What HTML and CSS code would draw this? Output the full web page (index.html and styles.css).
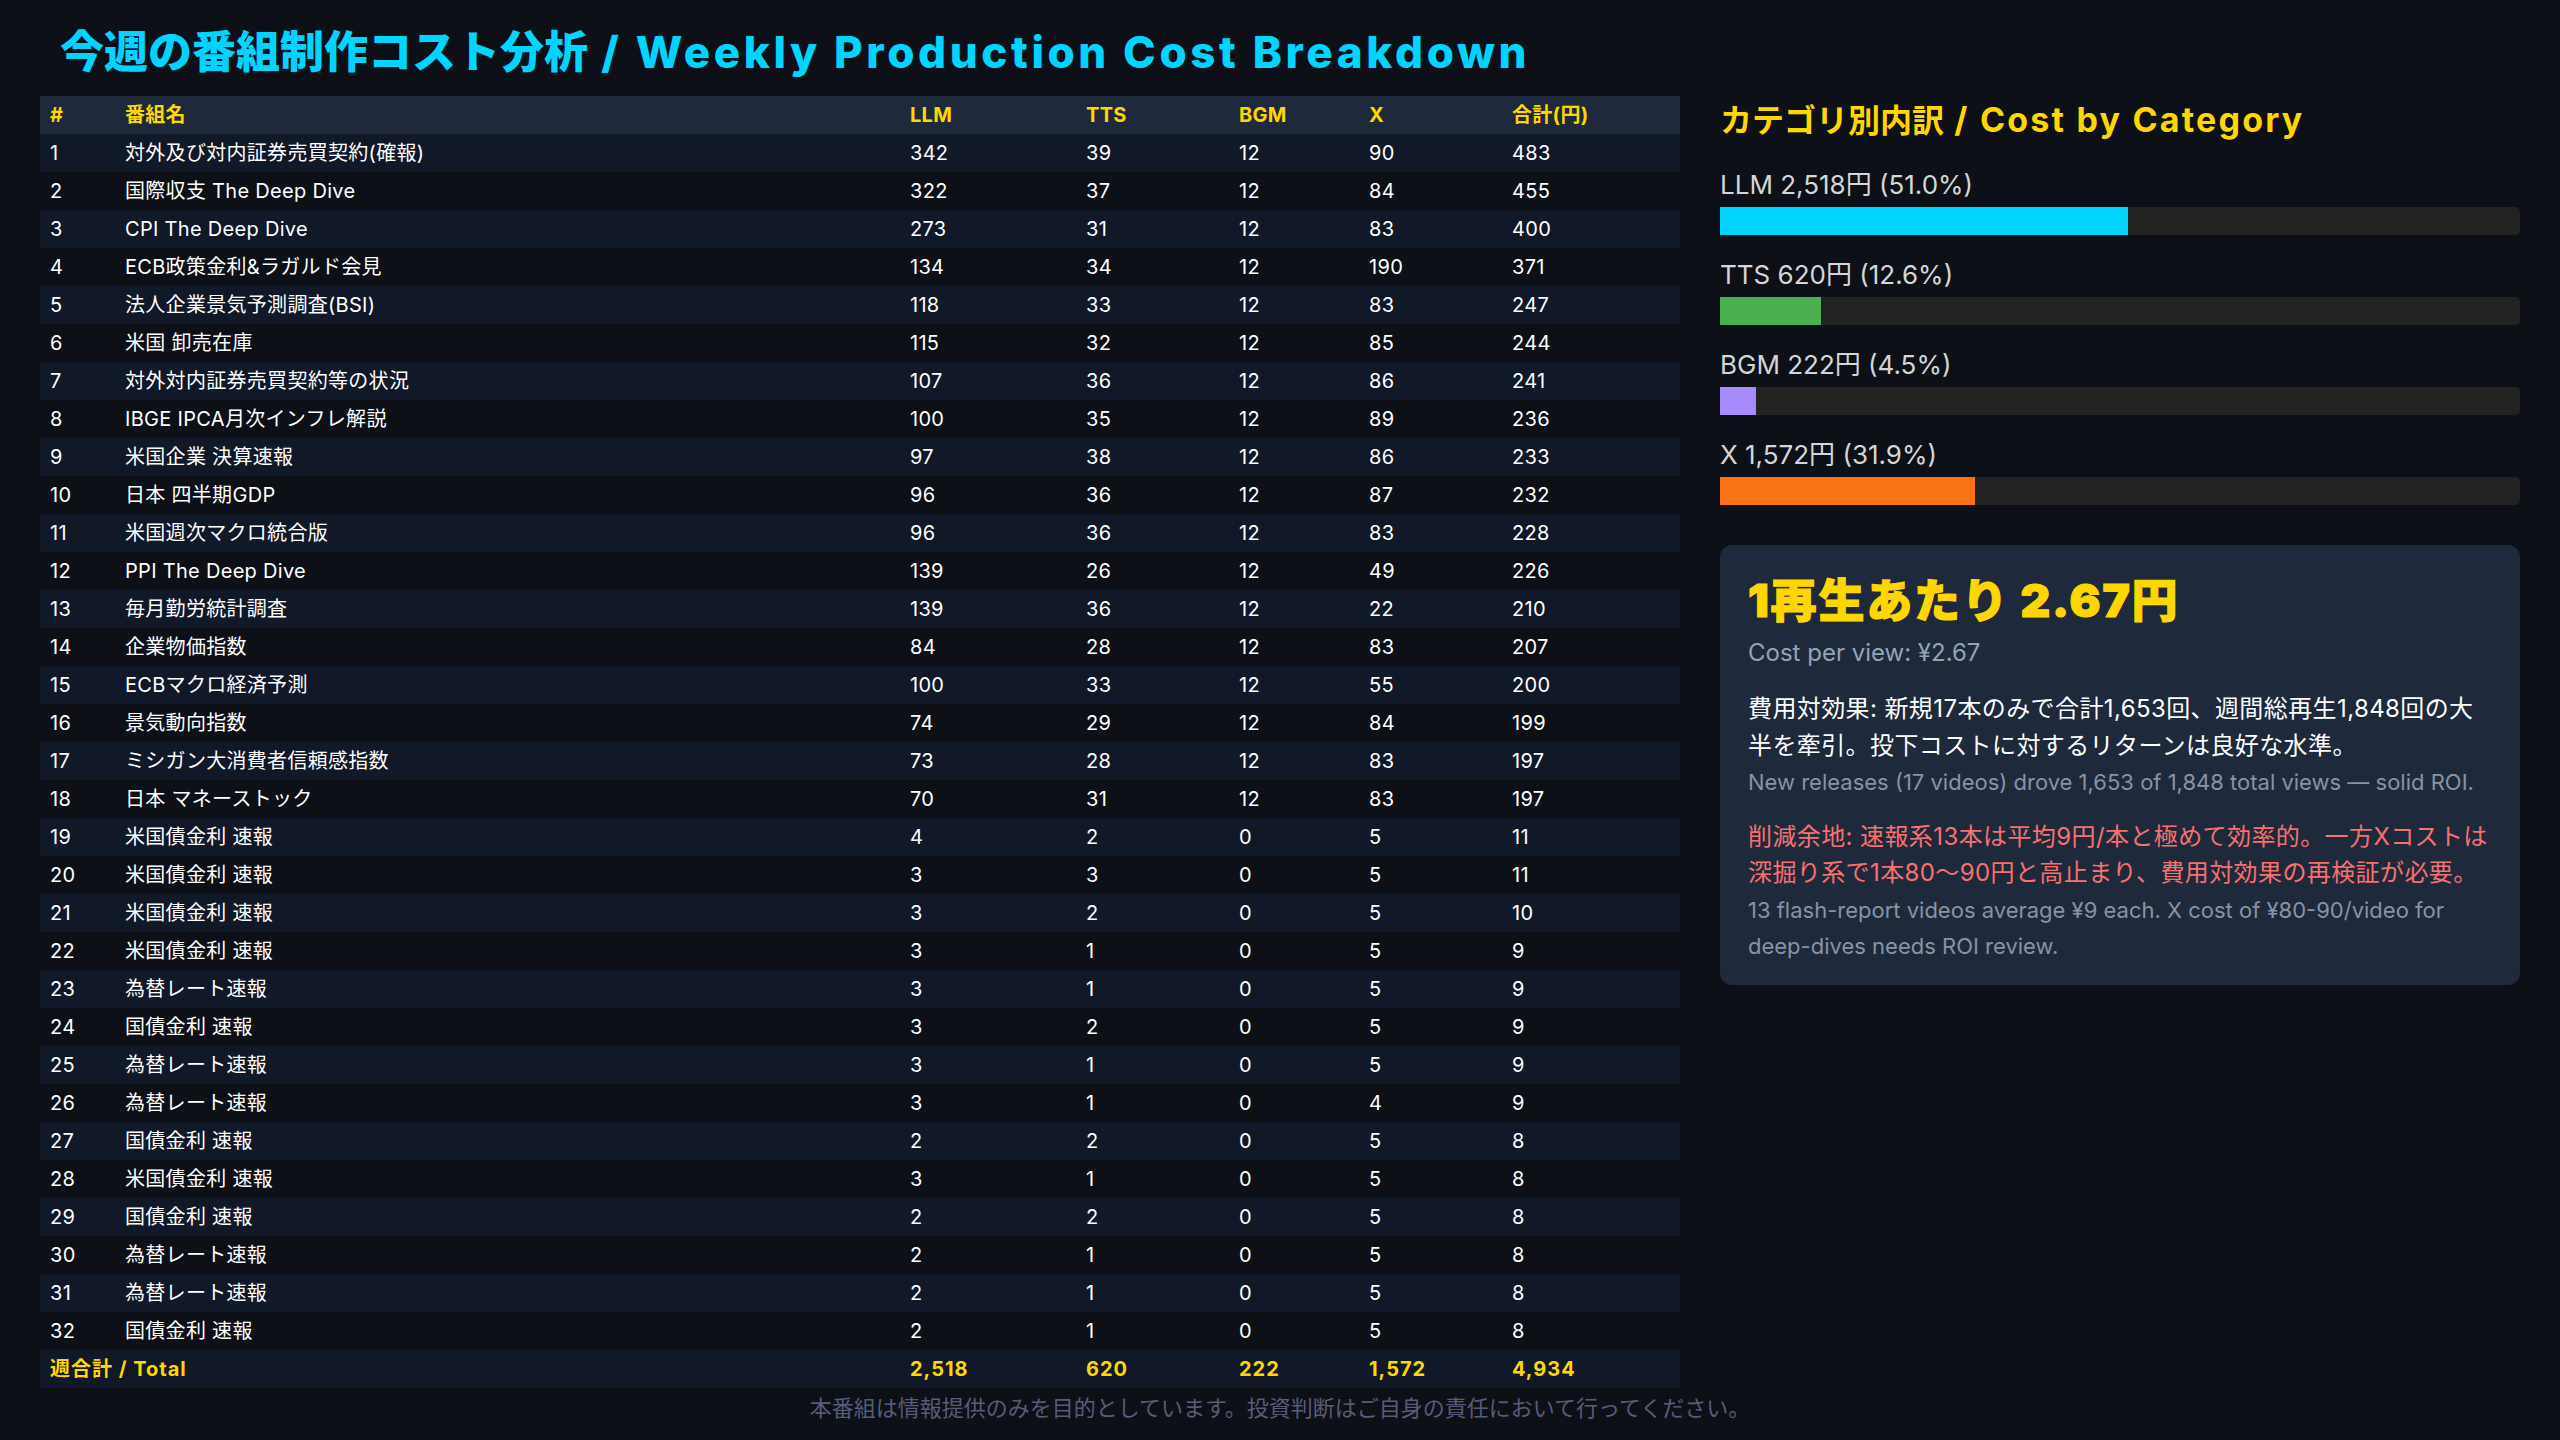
FILE: index.html
```html
<!DOCTYPE html>
<html lang="ja">
<head>
<meta charset="utf-8">
<title>Weekly Production Cost Breakdown</title>
<link rel="stylesheet" href="styles.css">
</head>
<body>
<h1 class="title">今週の番組制作コスト分析<span class="title-lat"> / Weekly Production Cost Breakdown</span></h1>
<div class="main">
  <div class="left">
    <table class="cost">
      <colgroup>
        <col class="c-no"><col class="c-name"><col class="c-llm"><col class="c-tts"><col class="c-bgm"><col class="c-x"><col class="c-total">
      </colgroup>
      <thead>
        <tr><th>#</th><th>番組名</th><th>LLM</th><th>TTS</th><th>BGM</th><th>X</th><th>合計(円)</th></tr>
      </thead>
      <tbody>
        <tr><td>1</td><td>対外及び対内証券売買契約(確報)</td><td>342</td><td>39</td><td>12</td><td>90</td><td>483</td></tr>
        <tr><td>2</td><td>国際収支 The Deep Dive</td><td>322</td><td>37</td><td>12</td><td>84</td><td>455</td></tr>
        <tr><td>3</td><td>CPI The Deep Dive</td><td>273</td><td>31</td><td>12</td><td>83</td><td>400</td></tr>
        <tr><td>4</td><td>ECB政策金利&amp;ラガルド会見</td><td>134</td><td>34</td><td>12</td><td>190</td><td>371</td></tr>
        <tr><td>5</td><td>法人企業景気予測調査(BSI)</td><td>118</td><td>33</td><td>12</td><td>83</td><td>247</td></tr>
        <tr><td>6</td><td>米国 卸売在庫</td><td>115</td><td>32</td><td>12</td><td>85</td><td>244</td></tr>
        <tr><td>7</td><td>対外対内証券売買契約等の状況</td><td>107</td><td>36</td><td>12</td><td>86</td><td>241</td></tr>
        <tr><td>8</td><td>IBGE IPCA月次インフレ解説</td><td>100</td><td>35</td><td>12</td><td>89</td><td>236</td></tr>
        <tr><td>9</td><td>米国企業 決算速報</td><td>97</td><td>38</td><td>12</td><td>86</td><td>233</td></tr>
        <tr><td>10</td><td>日本 四半期GDP</td><td>96</td><td>36</td><td>12</td><td>87</td><td>232</td></tr>
        <tr><td>11</td><td>米国週次マクロ統合版</td><td>96</td><td>36</td><td>12</td><td>83</td><td>228</td></tr>
        <tr><td>12</td><td>PPI The Deep Dive</td><td>139</td><td>26</td><td>12</td><td>49</td><td>226</td></tr>
        <tr><td>13</td><td>毎月勤労統計調査</td><td>139</td><td>36</td><td>12</td><td>22</td><td>210</td></tr>
        <tr><td>14</td><td>企業物価指数</td><td>84</td><td>28</td><td>12</td><td>83</td><td>207</td></tr>
        <tr><td>15</td><td>ECBマクロ経済予測</td><td>100</td><td>33</td><td>12</td><td>55</td><td>200</td></tr>
        <tr><td>16</td><td>景気動向指数</td><td>74</td><td>29</td><td>12</td><td>84</td><td>199</td></tr>
        <tr><td>17</td><td>ミシガン大消費者信頼感指数</td><td>73</td><td>28</td><td>12</td><td>83</td><td>197</td></tr>
        <tr><td>18</td><td>日本 マネーストック</td><td>70</td><td>31</td><td>12</td><td>83</td><td>197</td></tr>
        <tr><td>19</td><td>米国債金利 速報</td><td>4</td><td>2</td><td>0</td><td>5</td><td>11</td></tr>
        <tr><td>20</td><td>米国債金利 速報</td><td>3</td><td>3</td><td>0</td><td>5</td><td>11</td></tr>
        <tr><td>21</td><td>米国債金利 速報</td><td>3</td><td>2</td><td>0</td><td>5</td><td>10</td></tr>
        <tr><td>22</td><td>米国債金利 速報</td><td>3</td><td>1</td><td>0</td><td>5</td><td>9</td></tr>
        <tr><td>23</td><td>為替レート速報</td><td>3</td><td>1</td><td>0</td><td>5</td><td>9</td></tr>
        <tr><td>24</td><td>国債金利 速報</td><td>3</td><td>2</td><td>0</td><td>5</td><td>9</td></tr>
        <tr><td>25</td><td>為替レート速報</td><td>3</td><td>1</td><td>0</td><td>5</td><td>9</td></tr>
        <tr><td>26</td><td>為替レート速報</td><td>3</td><td>1</td><td>0</td><td>4</td><td>9</td></tr>
        <tr><td>27</td><td>国債金利 速報</td><td>2</td><td>2</td><td>0</td><td>5</td><td>8</td></tr>
        <tr><td>28</td><td>米国債金利 速報</td><td>3</td><td>1</td><td>0</td><td>5</td><td>8</td></tr>
        <tr><td>29</td><td>国債金利 速報</td><td>2</td><td>2</td><td>0</td><td>5</td><td>8</td></tr>
        <tr><td>30</td><td>為替レート速報</td><td>2</td><td>1</td><td>0</td><td>5</td><td>8</td></tr>
        <tr><td>31</td><td>為替レート速報</td><td>2</td><td>1</td><td>0</td><td>5</td><td>8</td></tr>
        <tr><td>32</td><td>国債金利 速報</td><td>2</td><td>1</td><td>0</td><td>5</td><td>8</td></tr>
        <tr class="total"><td colspan="2">週合計 / Total</td><td>2,518</td><td>620</td><td>222</td><td>1,572</td><td>4,934</td></tr>
      </tbody>
    </table>
  </div>
  <div class="right">
    <h2 class="cat-title">カテゴリ別内訳<span class="cat-lat"> / Cost by Category</span></h2>
    <div class="cats">
      <div class="cat">
        <div class="cat-label">LLM 2,518円 (51.0%)</div>
        <div class="track"><div class="fill fill-llm" style="width:51.0%"></div></div>
      </div>
      <div class="cat">
        <div class="cat-label">TTS 620円 (12.6%)</div>
        <div class="track"><div class="fill fill-tts" style="width:12.6%"></div></div>
      </div>
      <div class="cat">
        <div class="cat-label">BGM 222円 (4.5%)</div>
        <div class="track"><div class="fill fill-bgm" style="width:4.5%"></div></div>
      </div>
      <div class="cat">
        <div class="cat-label">X 1,572円 (31.9%)</div>
        <div class="track"><div class="fill fill-x" style="width:31.9%"></div></div>
      </div>
    </div>
    <div class="card">
      <div class="cpv">1再生あたり 2.67円</div>
      <div class="cpv-sub">Cost per view: ¥2.67</div>
      <p class="note">費用対効果: 新規17本のみで合計1,653回、週間総再生1,848回の大半を牽引。投下コストに対するリターンは良好な水準。<br><span class="en">New releases (17 videos) drove 1,653 of 1,848 total views — solid ROI.</span></p>
      <p class="note warn">削減余地: 速報系13本は平均9円/本と極めて効率的。一方Xコストは深掘り系で1本80〜90円と高止まり、費用対効果の再検証が必要。<br><span class="en">13 flash-report videos average ¥9 each. X cost of ¥80-90/video for deep-dives needs ROI review.</span></p>
    </div>
  </div>
</div>
<div class="footer">本番組は情報提供のみを目的としています。投資判断はご自身の責任において行ってください。</div>
</body>
</html>
```

FILE: styles.css
```css
html, body {
  margin: 0;
  padding: 0;
}
body {
  background: #0d1017;
  color: #ffffff;
  font-family: "Inter", "Noto Sans CJK JP", sans-serif;
  padding: 26px 40px 0 40px;
  width: 2560px;
  height: 1440px;
  box-sizing: border-box;
  overflow: hidden;
}
.title {
  margin: 0;
  padding-left: 20px;
  font-size: 44px;
  line-height: 52px;
  font-weight: 800;
  color: #00d4ff;
  white-space: nowrap;
}
.title-lat {
  letter-spacing: 3.6px;
}
.main {
  display: flex;
  gap: 40px;
  margin-top: 18px;
  align-items: flex-start;
}
.left {
  width: 1640px;
  flex: none;
}
.right {
  flex: 1;
  min-width: 0;
}
.cost {
  width: 1640px;
  table-layout: fixed;
  border-collapse: collapse;
  border-spacing: 0;
  font-size: 20px;
}
.c-no { width: 75px; }
.c-name { width: 785px; }
.c-llm { width: 176px; }
.c-tts { width: 153px; }
.c-bgm { width: 130px; }
.c-x { width: 143px; }
.c-total { width: 178px; }
.cost th, .cost td {
  height: 38px;
  padding: 0 10px;
  text-align: left;
  vertical-align: middle;
  white-space: nowrap;
  line-height: 24px;
  letter-spacing: 0.3px;
}
.cost thead tr {
  background: #1e293b;
}
.cost th {
  color: #ffd700;
  font-weight: 700;
}
.cost tbody tr:nth-child(odd) {
  background: #111827;
}
.cost tbody tr:nth-child(even) {
  background: #0d1017;
}
.cost tr.total td {
  color: #ffd700;
  font-weight: 700;
  letter-spacing: 1px;
}
.cat-title {
  margin: 4px 0 0 0;
  font-size: 32px;
  line-height: 40px;
  font-weight: 700;
  color: #ffd700;
  white-space: nowrap;
}
.cat-lat {
  font-size: 34px;
  letter-spacing: 2.2px;
}
.cats {
  margin-top: 28px;
  display: flex;
  flex-direction: column;
  gap: 24px;
}
.cat-label {
  font-size: 26px;
  line-height: 32px;
  color: #d6d6d6;
}
.track {
  margin-top: 6px;
  height: 28px;
  background: #222222;
  border-radius: 0 5px 5px 0;
}
.fill {
  height: 100%;
}
.fill-llm { background: #00d4ff; }
.fill-tts { background: #4caf50; }
.fill-bgm { background: #a78bfa; }
.fill-x { background: #f97316; }
.card {
  margin-top: 40px;
  background: #1e293b;
  border-radius: 12px;
  padding: 28px 28px 20px 28px;
}
.cpv {
  font-size: 46px;
  line-height: 55px;
  font-weight: 900;
  color: #ffd700;
  letter-spacing: 1.8px;
  -webkit-text-stroke: 1.2px #ffd700;
}
.cpv-sub {
  margin-top: 10px;
  font-size: 24px;
  line-height: 30px;
  color: #94a3b8;
}
.note {
  margin: 23px 0 0 0;
  font-size: 24px;
  line-height: 36.5px;
  color: #ffffff;
  letter-spacing: 0.4px;
}
.note.warn {
  margin-top: 18px;
  color: #f87171;
}
.note .en {
  font-size: 22px;
  letter-spacing: 0;
  color: #8893a5;
}
.footer {
  margin-top: 5px;
  text-align: center;
  font-size: 22px;
  line-height: 30px;
  color: #575c78;
}
```
